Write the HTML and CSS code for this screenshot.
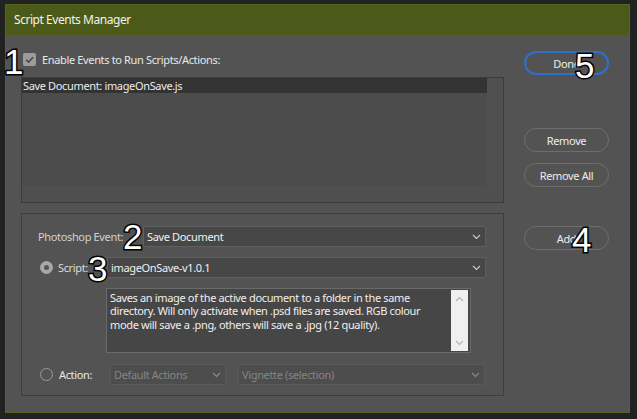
FILE: index.html
```html
<!DOCTYPE html>
<html>
<head>
<meta charset="utf-8">
<link rel="stylesheet" href="styles.css">
</head>
<body>
<div class="window">
  <div class="titlebar">Script Events Manager</div>
  <div class="content">
    <div class="left">
      <div class="enable-row">
        <span class="checkbox"><svg width="13" height="13" viewBox="0 0 13 13"><polyline points="3.2,6.8 5.6,9 10,4.2" fill="none" stroke="#4a4a4a" stroke-width="1.6"/></svg></span>
        <span class="enable-label">Enable Events to Run Scripts/Actions:</span>
        <span class="badge b1">1</span>
      </div>
      <div class="listbox">
        <div class="list-item">Save Document: imageOnSave.js</div>
        <div class="list-vscroll"></div>
        <div class="list-hscroll"></div>
      </div>
      <div class="group">
        <div class="row row-event">
          <span class="label label-event">Photoshop Event:</span>
          <div class="select select-event"><span>Save Document</span><svg class="chev" width="9" height="6" viewBox="0 0 9 6"><polyline points="1,1 4.5,4.5 8,1" fill="none" stroke="#c8c8c8" stroke-width="1.2"/></svg></div>
          <span class="badge b2">2</span>
        </div>
        <div class="row row-script">
          <span class="radio checked"><span class="dot"></span></span>
          <span class="label label-script">Script:</span>
          <div class="select select-script"><span>imageOnSave-v1.0.1</span><svg class="chev" width="9" height="6" viewBox="0 0 9 6"><polyline points="1,1 4.5,4.5 8,1" fill="none" stroke="#c8c8c8" stroke-width="1.2"/></svg></div>
          <span class="badge b3">3</span>
        </div>
        <div class="textarea">
          <div class="ta-text">Saves an image of the active document to a folder in the same directory. Will only activate when .psd files are saved. RGB colour mode will save a .png, others will save a .jpg (12 quality).</div>
          <div class="ta-scroll">
            <svg width="9" height="6" viewBox="0 0 9 6"><polyline points="1,5 4.5,1.5 8,5" fill="none" stroke="#b4b4b4" stroke-width="1.2"/></svg>
            <svg width="9" height="6" viewBox="0 0 9 6"><polyline points="1,1 4.5,4.5 8,1" fill="none" stroke="#b4b4b4" stroke-width="1.2"/></svg>
          </div>
        </div>
        <div class="row row-action">
          <span class="radio"></span>
          <span class="label label-action">Action:</span>
          <div class="select disabled select-set"><span>Default Actions</span><svg class="chev" width="9" height="6" viewBox="0 0 9 6"><polyline points="1,1 4.5,4.5 8,1" fill="none" stroke="#8a8a8a" stroke-width="1.2"/></svg></div>
          <div class="select disabled select-action"><span>Vignette (selection)</span><svg class="chev" width="9" height="6" viewBox="0 0 9 6"><polyline points="1,1 4.5,4.5 8,1" fill="none" stroke="#8a8a8a" stroke-width="1.2"/></svg></div>
        </div>
      </div>
    </div>
    <div class="right">
      <div class="btn btn-done">Done<span class="badge b5">5</span></div>
      <div class="btn btn-remove">Remove</div>
      <div class="btn btn-removeall">Remove All</div>
      <div class="btn btn-add">Add<span class="badge b4">4</span></div>
    </div>
  </div>
</div>
</body>
</html>
```

FILE: styles.css
```css
html, body {
  margin: 0;
  padding: 0;
  background: #222222;
  width: 637px;
  height: 419px;
  overflow: hidden;
}
body {
  font-family: "Noto Sans", "Open Sans", sans-serif;
  font-size: 11px;
  letter-spacing: -0.35px;
  color: #e6e6e6;
}
.window {
  margin: 4px 0 0 5px;
  width: 623px;
  height: 407px;
  border: 1px solid #56651f;
  background: #535353;
  display: flex;
  flex-direction: column;
}
.titlebar {
  height: 30px;
  background: #4b5a19;
  color: #f2f2f2;
  font-size: 12px;
  letter-spacing: -0.45px;
  line-height: 30px;
  padding-left: 8px;
  flex: none;
}
.content {
  display: flex;
  padding: 12px 0 0 15px;
  gap: 20px;
}
.left {
  width: 483px;
  display: flex;
  flex-direction: column;
}
.enable-row {
  position: relative;
  height: 25px;
  display: flex;
  align-items: center;
  padding-left: 2px;
}
.checkbox {
  width: 13px;
  height: 13px;
  background: #9c9c9c;
  border-radius: 2px;
  display: inline-block;
}
.checkbox svg { display: block; }
.enable-label {
  margin-left: 6px;
  color: #e8e8e8;
}
.listbox {
  margin-top: 5px;
  height: 124px;
  border: 1px solid #3c3c3c;
  background: #4c4c4c;
  position: relative;
}
.list-item {
  height: 15px;
  line-height: 15px;
  width: 465px;
  background: #333333;
  color: #ececec;
  padding-left: 1px;
}
.list-vscroll {
  position: absolute;
  right: 0;
  top: 0;
  width: 16px;
  height: 108px;
  background: #505050;
}
.list-hscroll {
  position: absolute;
  left: 0;
  bottom: 0;
  width: 100%;
  height: 16px;
  background: #4f4f4f;
}
.group {
  margin-top: 10px;
  border: 1px solid #3e3e3e;
  padding: 12px 0 0 16px;
  box-sizing: border-box;
  height: 183px;
}
.row {
  display: flex;
  align-items: center;
  position: relative;
}
.label { color: #dcdcdc; }
.label-event { width: 105px; color: #d2d2d2; }
.select {
  height: 21px;
  box-sizing: border-box;
  border: 1px solid #5f5f5f;
  background: #474747;
  display: flex;
  align-items: center;
  justify-content: space-between;
  padding: 0 4px 0 3px;
  color: #f0f0f0;
  border-radius: 1px;
}
.select.disabled {
  color: #858585;
  border-color: #5a5a5a;
  background: #4d4d4d;
}
.select-event { width: 343px; }
.row-script { margin-top: 10px; }
.radio {
  width: 11px;
  height: 11px;
  border-radius: 50%;
  border: 1px solid #9a9a9a;
  margin-left: 2px;
  display: flex;
  align-items: center;
  justify-content: center;
  flex: none;
}
.radio.checked {
  background: #a8a8a8;
  border-color: #a8a8a8;
}
.radio .dot {
  width: 5px;
  height: 5px;
  border-radius: 50%;
  background: #555555;
}
.label-script { margin-left: 5px; width: 49px; }
.select-script { width: 379px; }
.textarea {
  margin: 10px 0 0 68px;
  width: 365px;
  height: 65px;
  box-sizing: border-box;
  border: 1px solid #6a6a6a;
  background: #464646;
  display: flex;
  padding: 1px 2px 1px 3px;
}
.ta-text {
  flex: 1;
  line-height: 13.3px;
  color: #efefef;
  padding-top: 1px;
}
.ta-scroll {
  width: 17px;
  height: 61px;
  background: #f0f0f0;
  display: flex;
  flex-direction: column;
  align-items: center;
  justify-content: space-between;
  padding: 6px 0 5px;
  box-sizing: border-box;
}
.ta-scroll svg { display: block; }
.row-action { margin-top: 11px; }
.label-action { margin-left: 6px; width: 51px; color: #e8e8e8; }
.select-set { width: 116px; }
.select-action { width: 247px; margin-left: 12px; }
.right {
  width: 85px;
  display: flex;
  flex-direction: column;
}
.btn {
  position: relative;
  height: 24px;
  box-sizing: border-box;
  border: 1px solid #6e6e6e;
  border-radius: 12px;
  display: flex;
  align-items: center;
  justify-content: center;
  color: #ececec;
}
.btn-done {
  margin-top: 4px;
  border: 2px solid #2e6fd0;
}
.btn-remove { margin-top: 53px; }
.btn-removeall { margin-top: 11px; }
.btn-add { margin-top: 39px; }
.badge {
  position: absolute;
  font-family: "Liberation Sans", Arial, sans-serif;
  font-size: 35px;
  letter-spacing: 0;
  line-height: 1;
  color: #ffffff;
  -webkit-text-stroke: 3px #000000;
  paint-order: stroke fill;
}
.b1 { left: -17px; top: -3px; }
.b2 { left: 85px; top: -7px; }
.b3 { left: 50px; top: -6px; }
.b4 { left: 47px; top: -5px; }
.b5 { left: 49px; top: -5px; }
```
